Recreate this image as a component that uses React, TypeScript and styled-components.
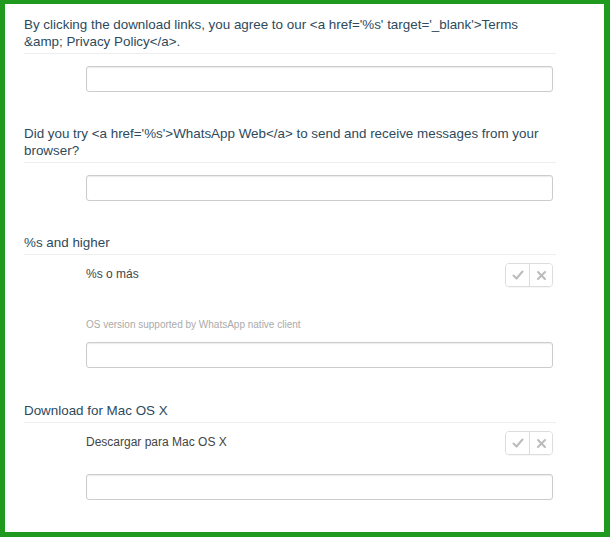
import * as React from "react";
import styled, { createGlobalStyle } from "styled-components";

const frameGreen = "#1f9a1f";
const headingBlue = "#2d4a5c";
const textGrey = "#444";
const hintGrey = "#aaa";
const lineGrey = "#eee";
const inputBorder = "#ccc";

const GlobalStyle = createGlobalStyle`
  html, body {
    margin: 0;
    padding: 0;
    background: #fff;
  }
  * {
    box-sizing: border-box;
  }
`;

const Frame = styled.div`
  width: 610px;
  height: 537px;
  border-style: solid;
  border-color: ${frameGreen};
  border-width: 4px 6px 5px 5px;
  background: #fff;
  padding: 12px 48px 0 19px;
  font-family: "Liberation Sans", Arial, sans-serif;
  overflow: hidden;
`;

const Section = styled.section<{ after?: number }>`
  display: flex;
  flex-direction: column;
  margin-bottom: ${(p) => p.after ?? 33}px;
`;

const Heading = styled.div`
  font-size: 13.4px;
  line-height: 17px;
  color: ${headingBlue};
  padding-bottom: 3px;
  border-bottom: 1px solid ${lineGrey};
`;

const Body = styled.div<{ top: number }>`
  display: flex;
  flex-direction: column;
  margin: ${(p) => p.top}px 3px 0 62px;
`;

const Row = styled.div`
  display: flex;
  align-items: center;
  justify-content: space-between;
  height: 24px;
`;

const Source = styled.div`
  font-size: 12px;
  color: ${textGrey};
  align-self: flex-start;
  padding-top: 4px;
`;

const Hint = styled.div`
  font-size: 10px;
  line-height: 12px;
  color: ${hintGrey};
  margin: 32px 0 11px;
`;

const ButtonGroup = styled.div`
  display: flex;
  height: 24px;
  border: 1px solid #ddd;
  border-radius: 4px;
  box-shadow: 0 1px 1px rgba(0, 0, 0, 0.04);
  overflow: hidden;
`;

const IconButton = styled.button`
  width: 23px;
  height: 22px;
  padding: 0;
  margin: 0;
  border: none;
  background: #fff;
  display: flex;
  align-items: center;
  justify-content: center;
  cursor: pointer;

  & + & {
    border-left: 1px solid #ddd;
  }
`;

const Field = styled.input<{ gap: number }>`
  margin-top: ${(p) => p.gap}px;
  height: 26px;
  width: 100%;
  border: 1px solid ${inputBorder};
  border-radius: 3px;
  box-shadow: inset 0 1px 1px rgba(0, 0, 0, 0.08);
  background: #fff;
  font-family: inherit;
  font-size: 12px;
  padding: 4px 8px;
  outline: none;
`;

const CheckIcon = () => (
  <svg width="12" height="12" viewBox="0 0 12 12">
    <path
      d="M1.5 6.5 L4.5 9.5 L10.5 2.5"
      fill="none"
      stroke="#bbb"
      strokeWidth="2"
      strokeLinecap="round"
      strokeLinejoin="round"
    />
  </svg>
);

const CrossIcon = () => (
  <svg width="11" height="11" viewBox="0 0 11 11">
    <path
      d="M2 2 L9 9 M9 2 L2 9"
      fill="none"
      stroke="#bbb"
      strokeWidth="2"
      strokeLinecap="round"
    />
  </svg>
);

const Review = () => (
  <ButtonGroup>
    <IconButton>
      <CheckIcon />
    </IconButton>
    <IconButton>
      <CrossIcon />
    </IconButton>
  </ButtonGroup>
);

export default function App() {
  return (
    <>
      <GlobalStyle />
      <Frame>
        <Section>
          <Heading>
            By clicking the download links, you agree to our &lt;a href='%s'
            target='_blank'&gt;Terms &amp;amp; Privacy Policy&lt;/a&gt;.
          </Heading>
          <Body top={12}>
            <Field gap={0} />
          </Body>
        </Section>

        <Section>
          <Heading>
            Did you try &lt;a href='%s'&gt;WhatsApp Web&lt;/a&gt; to send and
            receive messages from your browser?
          </Heading>
          <Body top={12}>
            <Field gap={0} />
          </Body>
        </Section>

        <Section after={34}>
          <Heading>%s and higher</Heading>
          <Body top={8}>
            <Row>
              <Source>%s o más</Source>
              <Review />
            </Row>
            <Hint>OS version supported by WhatsApp native client</Hint>
            <Field gap={0} />
          </Body>
        </Section>

        <Section>
          <Heading>Download for Mac OS X</Heading>
          <Body top={8}>
            <Row>
              <Source>Descargar para Mac OS X</Source>
              <Review />
            </Row>
            <Field gap={19} />
          </Body>
        </Section>
      </Frame>
    </>
  );
}
